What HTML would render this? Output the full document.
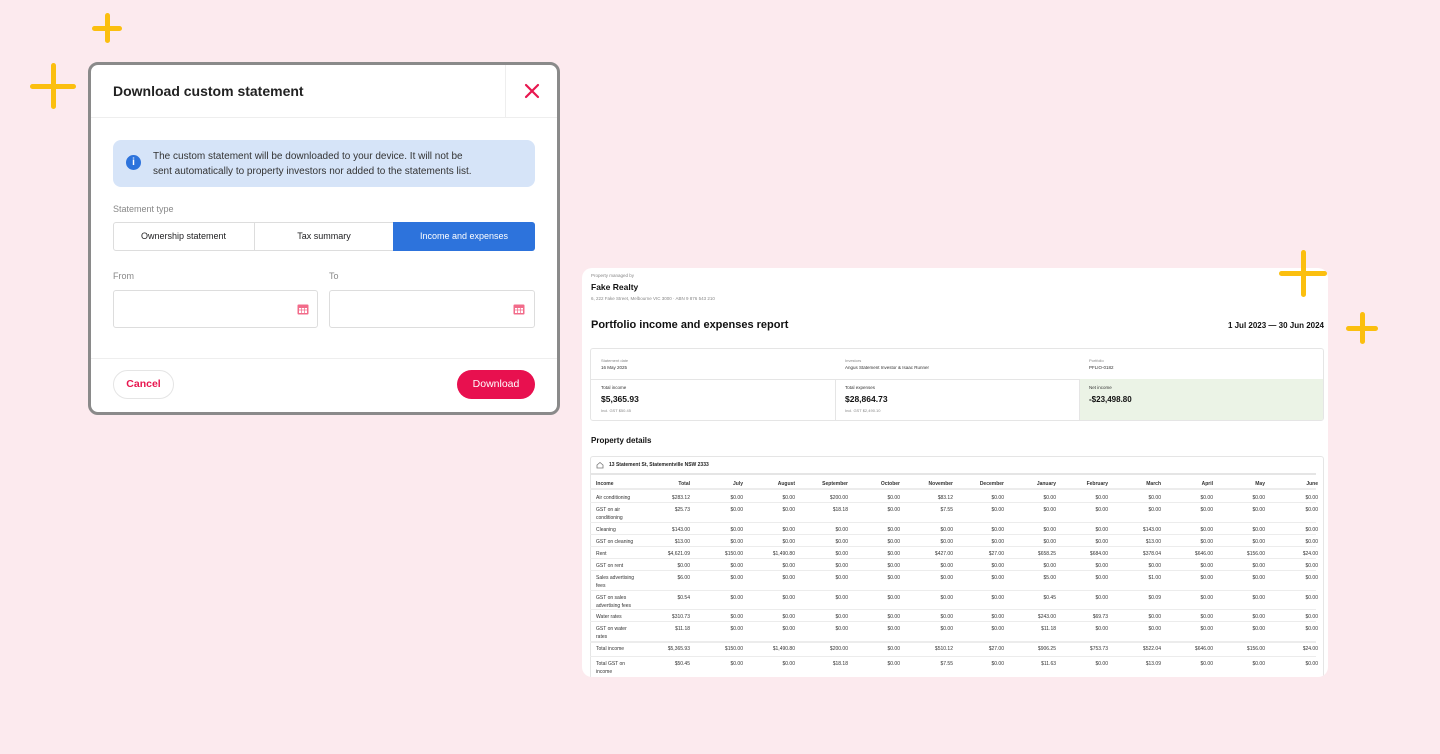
<!DOCTYPE html>
<html><head><meta charset="utf-8"><style>
*{box-sizing:border-box;margin:0;padding:0}
body{width:1440px;height:754px;background:#fceaee;position:relative;overflow:hidden;font-family:"Liberation Sans",sans-serif;color:#1d1d1f}
.plus{position:absolute;z-index:5}
.plus:before,.plus:after{content:"";position:absolute;background:#fbbf0f;border-radius:3px}
.plus:before{left:50%;top:0;bottom:0;width:5px;margin-left:-2.5px}
.plus:after{top:50%;left:0;right:0;height:5px;margin-top:-2.5px}
.modal{position:absolute;left:88px;top:62px;width:472px;height:353px;background:#fff;border:3px solid #8a8a8a;border-radius:10px;overflow:hidden}
.a{position:absolute}
.rep{position:absolute;left:582px;top:268px;width:746px;height:409px;background:#fff;border-radius:10px;overflow:hidden}
.t{position:absolute;font-size:5px;color:#333;white-space:nowrap}
.r{text-align:right}
.hl{position:absolute;left:8px;width:726px;height:1px;background:#ececec}
</style></head><body>
<div class="plus" style="left:92px;top:13px;width:30px;height:30px"></div>
<div class="plus" style="left:30px;top:63px;width:46px;height:46px"></div>
<div class="plus" style="left:1279px;top:250px;width:48px;height:47px"></div>
<div class="plus" style="left:1346px;top:312px;width:32px;height:32px"></div>

<div class="modal">
 <div class="a" style="left:22px;top:18px;font-size:14px;font-weight:bold;color:#222">Download custom statement</div>
 <div class="a" style="left:414px;top:0;width:1px;height:52px;background:#eee"></div>
 <svg class="a" style="left:433px;top:18px" width="16" height="16" viewBox="0 0 16 16"><path d="M2 2L14 14M14 2L2 14" stroke="#e8164f" stroke-width="2.2" stroke-linecap="round"/></svg>
 <div class="a" style="left:0;top:52px;width:100%;height:1px;background:#eee"></div>
 <div class="a" style="left:22px;top:75px;width:422px;height:47px;background:#d6e4f8;border-radius:8px"></div>
 <div class="a" style="left:35px;top:90px;width:15px;height:15px;border-radius:50%;background:#2d73dc;color:#fff;font-size:10px;font-weight:bold;text-align:center;line-height:15px">i</div>
 <div class="a" style="left:62px;top:84px;font-size:10px;line-height:15px;color:#333">The custom statement will be downloaded to your device. It will not be<br>sent automatically to property investors nor added to the statements list.</div>
 <div class="a" style="left:22px;top:139px;font-size:9px;color:#888">Statement type</div>
 <div class="a" style="left:22px;top:157px;width:422px;height:29px;border:1px solid #ddd;border-radius:3px"></div>
 <div class="a" style="left:163px;top:157px;width:1px;height:29px;background:#ddd"></div>
 <div class="a" style="left:22px;top:166px;width:141px;text-align:center;font-size:9px">Ownership statement</div>
 <div class="a" style="left:163px;top:166px;width:140px;text-align:center;font-size:9px">Tax summary</div>
 <div class="a" style="left:302px;top:157px;width:142px;height:29px;background:#2d73dc;border-radius:0 3px 3px 0;color:#fff;font-size:9px;text-align:center;line-height:29px">Income and expenses</div>
 <div class="a" style="left:22px;top:206px;font-size:9px;color:#888">From</div>
 <div class="a" style="left:238px;top:206px;font-size:9px;color:#888">To</div>
 <div class="a" style="left:22px;top:225px;width:205px;height:38px;border:1px solid #ddd;border-radius:3px"></div>
 <div class="a" style="left:238px;top:225px;width:206px;height:38px;border:1px solid #ddd;border-radius:3px"></div>
 <svg class="a" style="left:206px;top:238px" width="12" height="12" viewBox="0 0 12 12"><rect x="0.5" y="1.5" width="11" height="10" rx="1" fill="#f26b8a"/><rect x="2" y="5" width="8" height="5" fill="#fff"/><path d="M2 7h8M4.5 5v5M7.5 5v5" stroke="#f26b8a" stroke-width=".7"/></svg>
 <svg class="a" style="left:422px;top:238px" width="12" height="12" viewBox="0 0 12 12"><rect x="0.5" y="1.5" width="11" height="10" rx="1" fill="#f26b8a"/><rect x="2" y="5" width="8" height="5" fill="#fff"/><path d="M2 7h8M4.5 5v5M7.5 5v5" stroke="#f26b8a" stroke-width=".7"/></svg>
 <div class="a" style="left:0;top:293px;width:100%;height:1px;background:#eee"></div>
 <div class="a" style="left:22px;top:305px;width:61px;height:29px;border:1px solid #e5e5e5;border-radius:15px;color:#e8164f;font-size:10.5px;text-align:center;line-height:27px;font-weight:bold">Cancel</div>
 <div class="a" style="left:366px;top:305px;width:78px;height:29px;background:#e8104f;border-radius:15px;color:#fff;font-size:10.5px;text-align:center;line-height:29px">Download</div>
</div>

<div class="rep">
 <div class="t" style="left:9px;top:5px;font-size:4.5px;color:#888">Property managed by</div>
 <div class="t" style="left:9px;top:14px;font-size:8.5px;font-weight:bold;color:#111">Fake Realty</div>
 <div class="t" style="left:9px;top:28px;font-size:4.5px;color:#888">6, 222 Fake Street, Melbourne VIC 3000 · ABN 9 876 543 210</div>
 <div class="t" style="left:9px;top:51px;font-size:11px;font-weight:bold;color:#111">Portfolio income and expenses report</div>
 <div class="t" style="right:4px;top:53px;font-size:8px;font-weight:bold;color:#111">1 Jul 2023 — 30 Jun 2024</div>
 <div class="a" style="left:8px;top:80px;width:734px;height:73px;border:1px solid #e5e5e5;border-radius:3px;overflow:hidden">
  <div class="a" style="left:0;top:30px;width:100%;height:1px;background:#e5e5e5"></div>
  <div class="a" style="left:244px;top:30px;width:1px;height:43px;background:#e5e5e5"></div>
  <div class="a" style="left:488px;top:30px;width:246px;height:43px;background:#ebf3e6;border-left:1px solid #e5e5e5"></div>
  <div class="t" style="left:10px;top:9px;font-size:4px;color:#888">Statement date</div>
  <div class="t" style="left:10px;top:16px;font-size:4.5px">16 May 2025</div>
  <div class="t" style="left:254px;top:9px;font-size:4px;color:#888">Investors</div>
  <div class="t" style="left:254px;top:16px;font-size:4.5px">Angus Statement Investor &amp; Isaac Runner</div>
  <div class="t" style="left:498px;top:9px;font-size:4px;color:#888">Portfolio</div>
  <div class="t" style="left:498px;top:16px;font-size:4.5px">PFLIO-0182</div>
  <div class="t" style="left:10px;top:36px;font-size:4.5px">Total income</div>
  <div class="t" style="left:10px;top:45px;font-size:8.5px;font-weight:bold;color:#111">$5,365.93</div>
  <div class="t" style="left:10px;top:59px;font-size:4px;color:#888">Incl. GST $50.45</div>
  <div class="t" style="left:254px;top:36px;font-size:4.5px">Total expenses</div>
  <div class="t" style="left:254px;top:45px;font-size:8.5px;font-weight:bold;color:#111">$28,864.73</div>
  <div class="t" style="left:254px;top:59px;font-size:4px;color:#888">Incl. GST $2,490.10</div>
  <div class="t" style="left:498px;top:36px;font-size:4.5px">Net income</div>
  <div class="t" style="left:498px;top:46px;font-size:8px;font-weight:bold;color:#111">-$23,498.80</div>
 </div>
 <div class="t" style="left:9px;top:168px;font-size:8px;font-weight:bold;color:#111">Property details</div>
 <div class="a" style="left:8px;top:188px;width:734px;height:240px;border:1px solid #e5e5e5;border-radius:3px"></div>
 <svg class="a" style="left:14px;top:193px" width="8" height="8" viewBox="0 0 8 8"><path d="M1 4L4 1.5L7 4V7H1Z" fill="none" stroke="#777" stroke-width=".8"/></svg>
 <div class="t" style="left:27px;top:194px;font-size:5px;font-weight:bold;color:#222">13 Statement St, Statementville NSW 2333</div>
 <div class="hl" style="top:205px;height:2px;background:#e5e5e5"></div>
 <div id="tbl"></div>
</div>
<script>
var cols=[108,161,213,266,318,371,422,474,526,579,631,683,736];
var heads=["Total","July","August","September","October","November","December","January","February","March","April","May","June"];
var rows=[
[228,"Air conditioning",["$283.12","$0.00","$0.00","$200.00","$0.00","$83.12","$0.00","$0.00","$0.00","$0.00","$0.00","$0.00","$0.00"]],
[240,"GST on air|conditioning",["$25.73","$0.00","$0.00","$18.18","$0.00","$7.55","$0.00","$0.00","$0.00","$0.00","$0.00","$0.00","$0.00"]],
[260,"Cleaning",["$143.00","$0.00","$0.00","$0.00","$0.00","$0.00","$0.00","$0.00","$0.00","$143.00","$0.00","$0.00","$0.00"]],
[272,"GST on cleaning",["$13.00","$0.00","$0.00","$0.00","$0.00","$0.00","$0.00","$0.00","$0.00","$13.00","$0.00","$0.00","$0.00"]],
[284,"Rent",["$4,621.09","$150.00","$1,490.80","$0.00","$0.00","$427.00","$27.00","$658.25","$684.00","$378.04","$646.00","$156.00","$24.00"]],
[296,"GST on rent",["$0.00","$0.00","$0.00","$0.00","$0.00","$0.00","$0.00","$0.00","$0.00","$0.00","$0.00","$0.00","$0.00"]],
[308,"Sales advertising|fees",["$6.00","$0.00","$0.00","$0.00","$0.00","$0.00","$0.00","$5.00","$0.00","$1.00","$0.00","$0.00","$0.00"]],
[328,"GST on sales|advertising fees",["$0.54","$0.00","$0.00","$0.00","$0.00","$0.00","$0.00","$0.45","$0.00","$0.09","$0.00","$0.00","$0.00"]],
[347,"Water rates",["$310.73","$0.00","$0.00","$0.00","$0.00","$0.00","$0.00","$243.00","$69.73","$0.00","$0.00","$0.00","$0.00"]],
[359,"GST on water|rates",["$11.18","$0.00","$0.00","$0.00","$0.00","$0.00","$0.00","$11.18","$0.00","$0.00","$0.00","$0.00","$0.00"]],
[379,"Total income",["$5,365.93","$150.00","$1,490.80","$200.00","$0.00","$510.12","$27.00","$906.25","$753.73","$522.04","$646.00","$156.00","$24.00"]],
[394,"Total GST on|income",["$50.45","$0.00","$0.00","$18.18","$0.00","$7.55","$0.00","$11.63","$0.00","$13.09","$0.00","$0.00","$0.00"]]];
var h='<div class="t" style="left:14px;top:213px;font-weight:bold">Income</div>';
heads.forEach(function(x,i){h+='<div class="t r" style="left:'+(cols[i]-60)+'px;width:60px;top:213px;font-weight:bold">'+x+'</div>'});
h+='<div class="hl" style="top:220px;height:2px"></div>';
rows.forEach(function(r,k){var y=r[0];h+='<div class="t" style="left:14px;top:'+(y-2)+'px;line-height:8px">'+r[1].replace("|","<br>")+'</div>';
r[2].forEach(function(v,i){h+='<div class="t r" style="left:'+(cols[i]-60)+'px;width:60px;top:'+(y-2)+'px;line-height:8px">'+v+'</div>'});
var nx=k<rows.length-1?rows[k+1][0]:0; if(nx)h+='<div class="hl" style="top:'+(nx-6)+'px;'+(k==9?'height:2px':'')+'"></div>';});
document.getElementById('tbl').outerHTML=h;
</script>
</body></html>
